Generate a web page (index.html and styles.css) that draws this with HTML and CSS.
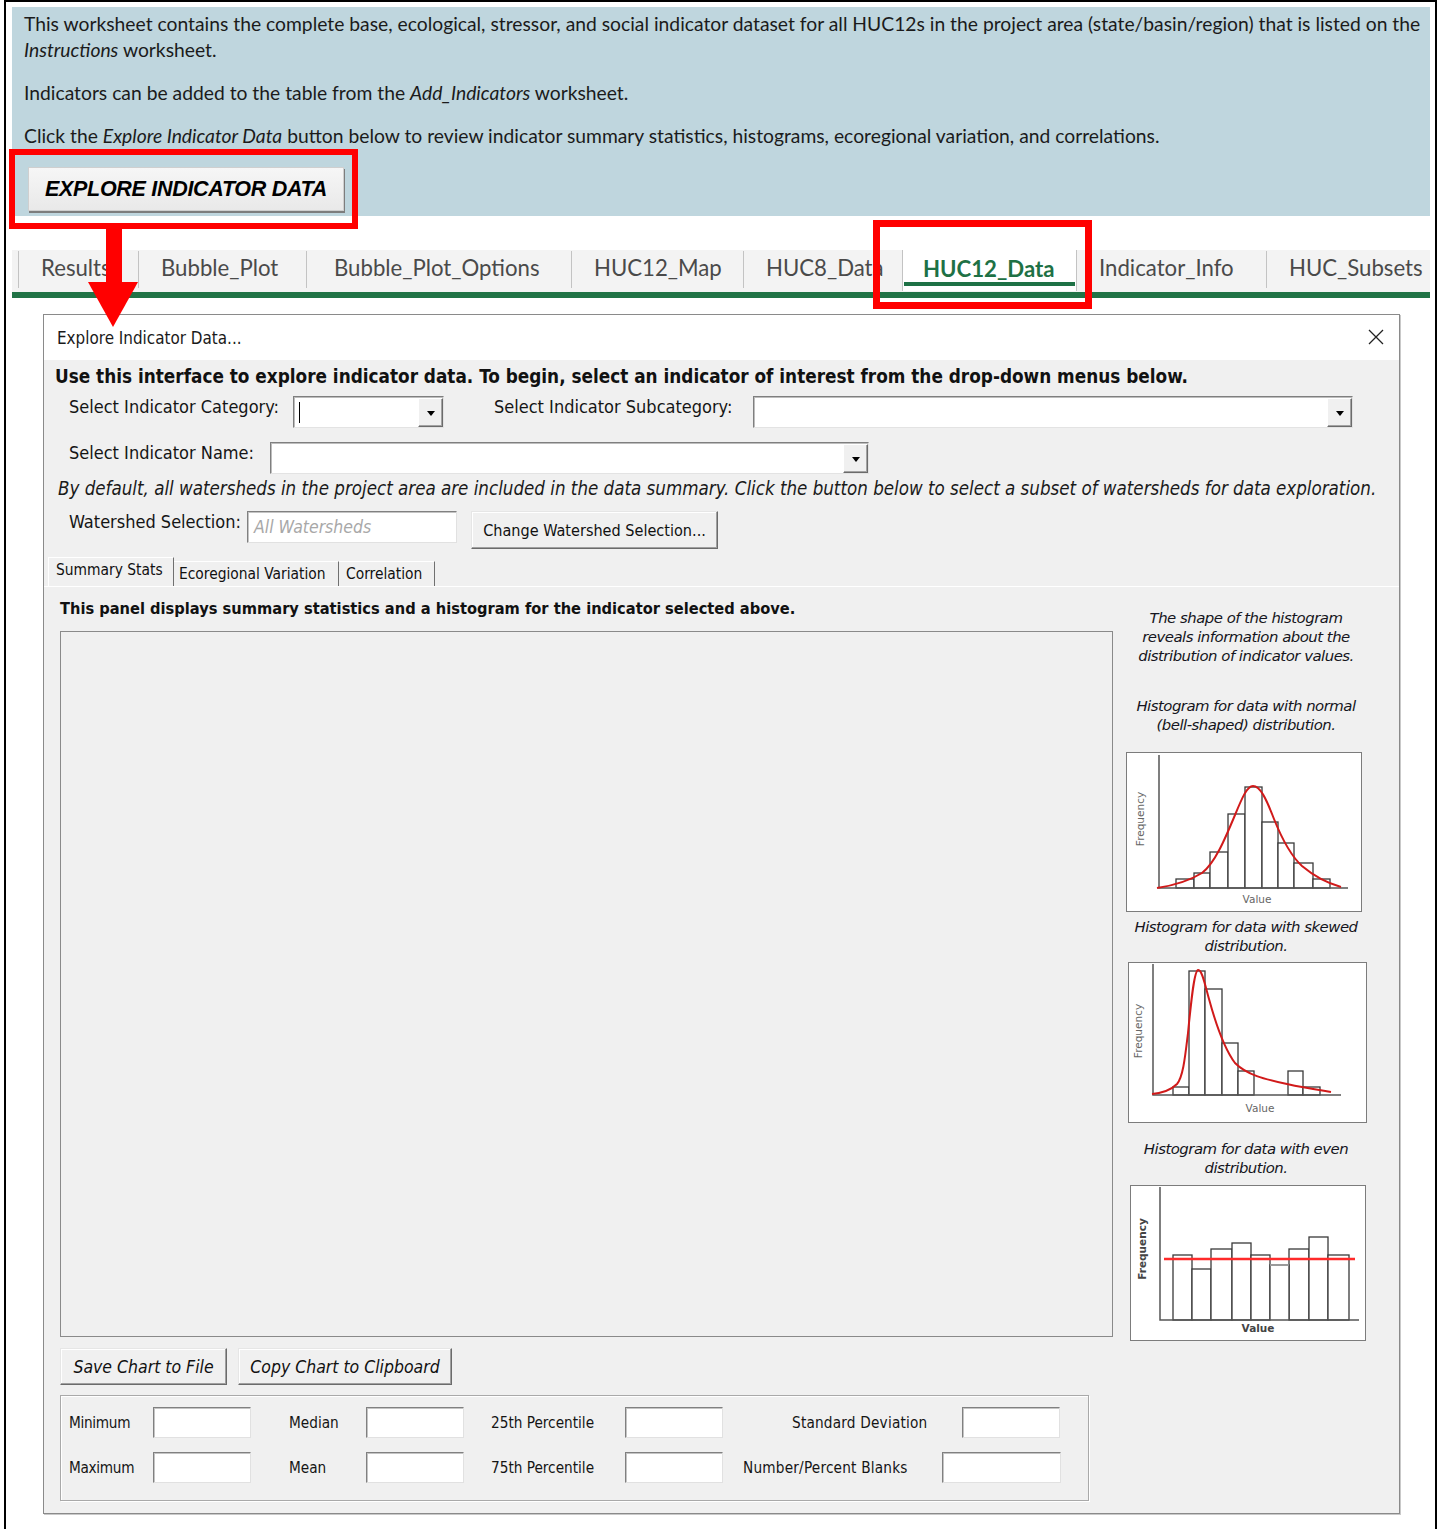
FILE: index.html
```html
<!DOCTYPE html>
<html lang="en">
<head>
<meta charset="utf-8">
<title>HUC12_Data</title>
<link rel="stylesheet" href="styles.css">
</head>
<body>
<div class="sheet">
  <section class="banner">
    <p class="nowrap">This worksheet contains the complete base, ecological, stressor, and social indicator dataset for all HUC12s in the project area (state/basin/region) that is listed on the<br><em>Instructions</em> worksheet.</p>
    <p class="nowrap">Indicators can be added to the table from the <em>Add_Indicators</em> worksheet.</p>
    <p class="nowrap">Click the <em>Explore Indicator Data</em> button below to review indicator summary statistics, histograms, ecoregional variation, and correlations.</p>
    <button class="explore-btn" type="button">EXPLORE INDICATOR DATA</button>
  </section>

  <nav class="sheet-tabs">
    <span class="sheet-tab">Results</span>
    <span class="sheet-tab">Bubble_Plot</span>
    <span class="sheet-tab">Bubble_Plot_Options</span>
    <span class="sheet-tab">HUC12_Map</span>
    <span class="sheet-tab">HUC8_Data</span>
    <span class="sheet-tab active">HUC12_Data</span>
    <span class="sheet-tab">Indicator_Info</span>
    <span class="sheet-tab">HUC_Subsets</span>
  </nav>

  <div class="cells">
    <div class="dialog">
      <header class="dlg-title">
        <span>Explore Indicator Data...</span>
        <svg class="dlg-close" width="16" height="16" viewBox="0 0 16 16" aria-hidden="true">
          <path d="M1 1 L15 15 M15 1 L1 15" stroke="#222" stroke-width="1.3" fill="none"/>
        </svg>
      </header>

      <div class="dlg-body">
        <p class="dlg-intro">Use this interface to explore indicator data. To begin, select an indicator of interest from the drop-down menus below.</p>

        <div class="form-row row-cat">
          <span class="lbl lbl-cat">Select Indicator Category:</span>
          <div class="combo combo-cat"><span class="combo-text"><i class="caret"></i></span><span class="combo-drop"><i class="tri"></i></span></div>
          <span class="lbl lbl-sub">Select Indicator Subcategory:</span>
          <div class="combo combo-sub"><span class="combo-text"></span><span class="combo-drop"><i class="tri"></i></span></div>
        </div>

        <div class="form-row row-name">
          <span class="lbl lbl-name">Select Indicator Name:</span>
          <div class="combo combo-name"><span class="combo-text"></span><span class="combo-drop"><i class="tri"></i></span></div>
        </div>

        <p class="dlg-note">By default, all watersheds in the project area are included in the data summary. Click the button below to select a subset of watersheds for data exploration.</p>

        <div class="form-row row-ws">
          <span class="lbl lbl-ws">Watershed Selection:</span>
          <div class="field field-ws">All Watersheds</div>
          <button class="btn btn-ws" type="button">Change Watershed Selection...</button>
        </div>

        <div class="page-tabs">
          <span class="page-tab active">Summary Stats</span>
          <span class="page-tab">Ecoregional Variation</span>
          <span class="page-tab">Correlation</span>
        </div>

        <div class="page">
          <div class="page-main">
            <p class="page-heading">This panel displays summary statistics and a histogram for the indicator selected above.</p>
            <div class="chart-box"></div>
            <div class="chart-actions">
              <button class="btn btn-save" type="button">Save Chart to File</button>
              <button class="btn btn-copy" type="button">Copy Chart to Clipboard</button>
            </div>
            <div class="stats">
              <div class="stats-row">
                <span class="s-lbl s1">Minimum</span><span class="field s-box"></span>
                <span class="s-lbl s2">Median</span><span class="field s-box"></span>
                <span class="s-lbl s3">25th Percentile</span><span class="field s-box"></span>
                <span class="s-lbl s4">Standard Deviation</span><span class="field s-box"></span>
              </div>
              <div class="stats-row">
                <span class="s-lbl s1">Maximum</span><span class="field s-box"></span>
                <span class="s-lbl s2">Mean</span><span class="field s-box"></span>
                <span class="s-lbl s3">75th Percentile</span><span class="field s-box"></span>
                <span class="s-lbl s4b">Number/Percent Blanks</span><span class="field s-box s-wide"></span>
              </div>
            </div>
          </div>

          <aside class="page-help">
            <p class="help-text help-intro">The shape of the histogram<br>reveals information about the<br>distribution of indicator values.</p>

            <p class="help-text help-normal">Histogram for data with normal<br>(bell-shaped) distribution.</p>
            <svg class="hist hist-normal" width="234" height="158" viewBox="0 0 234 158" aria-hidden="true">
              <g fill="#fff" stroke="#3a3a3a" stroke-width="1.3">
                <rect x="49" y="126" width="18" height="9"/>
                <rect x="67" y="120" width="16" height="15"/>
                <rect x="83" y="99" width="18" height="36"/>
                <rect x="101" y="61" width="17" height="74"/>
                <rect x="118" y="34" width="17" height="101"/>
                <rect x="135" y="69" width="16" height="66"/>
                <rect x="151" y="90" width="16" height="45"/>
                <rect x="167" y="110" width="19" height="25"/>
                <rect x="186" y="126" width="17" height="9"/>
              </g>
              <path d="M32 2 V135 H221" fill="none" stroke="#555" stroke-width="1.5"/>
              <path d="M30 135 C50 132 62 128 75 120 C88 110 98 86 108 62 C115 45 120 33 126 33 C133 33 139 45 147 66 C155 86 163 102 175 113 C188 124 200 130 214 134" fill="none" stroke="#d11a1a" stroke-width="2"/>
              <text class="ax-lbl" transform="translate(17 66) rotate(-90)" text-anchor="middle">Frequency</text>
              <text class="ax-lbl" x="130" y="150" text-anchor="middle">Value</text>
            </svg>

            <p class="help-text help-skewed">Histogram for data with skewed<br>distribution.</p>
            <svg class="hist hist-skewed" width="237" height="159" viewBox="0 0 237 159" aria-hidden="true">
              <g fill="#fff" stroke="#3a3a3a" stroke-width="1.3">
                <rect x="44" y="124" width="16" height="8"/>
                <rect x="60" y="8" width="16" height="124"/>
                <rect x="76" y="26" width="17" height="106"/>
                <rect x="93" y="80" width="16" height="52"/>
                <rect x="109" y="108" width="16" height="24"/>
                <rect x="159" y="108" width="15" height="24"/>
                <rect x="174" y="124" width="17" height="8"/>
              </g>
              <path d="M24 1 V132 H212" fill="none" stroke="#555" stroke-width="1.5"/>
              <path d="M23 131 C33 130 42 127 48 121 C54 114 56 95 59 70 C62 40 65 8 69 7 C73 6 76 22 80 36 C86 58 94 84 106 100 C118 112 135 116 158 121 C176 125 190 127 202 129" fill="none" stroke="#d11a1a" stroke-width="2"/>
              <text class="ax-lbl" transform="translate(13 68) rotate(-90)" text-anchor="middle">Frequency</text>
              <text class="ax-lbl" x="131" y="149" text-anchor="middle">Value</text>
            </svg>

            <p class="help-text help-even">Histogram for data with even<br>distribution.</p>
            <svg class="hist hist-even" width="234" height="154" viewBox="0 0 234 154" aria-hidden="true">
              <g fill="#fff" stroke="#3a3a3a" stroke-width="1.3">
                <rect x="42" y="69" width="19" height="65"/>
                <rect x="61" y="83" width="19" height="51"/>
                <rect x="80" y="63" width="21" height="71"/>
                <rect x="101" y="57" width="19" height="77"/>
                <rect x="120" y="69" width="19" height="65"/>
                <rect x="158" y="63" width="20" height="71"/>
                <rect x="178" y="51" width="19" height="83"/>
                <rect x="197" y="69" width="21" height="65"/>
              </g>
              <path d="M139 134 V79 H158 V134" fill="#fff" stroke="#3a3a3a" stroke-width="1.3"/>
              <path d="M139 79 H158" stroke="#b5b5b5" stroke-width="1.3"/>
              <path d="M29 1 V134 H228" fill="none" stroke="#555" stroke-width="1.5"/>
              <path d="M33 73 H224" stroke="#ff2a2a" stroke-width="2.6"/>
              <text class="ax-lbl ax-bold" transform="translate(15 63) rotate(-90)" text-anchor="middle">Frequency</text>
              <text class="ax-lbl ax-bold" x="127" y="146" text-anchor="middle">Value</text>
            </svg>
          </aside>
        </div>
      </div>
    </div>
  </div>

  <!-- red call-outs drawn over the sheet -->
  <div class="callout callout-btn"></div>
  <div class="callout callout-tab"></div>
  <svg class="callout-arrow" width="50" height="102" viewBox="0 0 50 102" aria-hidden="true">
    <rect x="18" y="0" width="16" height="57" fill="#ff0000"/>
    <polygon points="0,56 50,56 25,101" fill="#ff0000"/>
  </svg>
</div>
</body>
</html>
```

FILE: styles.css
```css
* { box-sizing: border-box; }

html, body {
  margin: 0;
  padding: 0;
  background: #fff;
}

body {
  width: 1442px;
  height: 1529px;
  overflow: hidden;
  font-family: "DejaVu Sans Condensed", "DejaVu Sans", sans-serif;
  color: #111;
}

/* ---------- worksheet frame ---------- */
.sheet {
  position: relative;
  margin-left: 4px;
  width: 1433px;
  height: 1540px;
  border: 2px solid #000;
  border-bottom: none;
  overflow: hidden;
  background: #fff;
}

.banner {
  margin: 5px 5px 0 6px;
  height: 209px;
  padding: 4px 0 0 12px;
  background: #bfd6de;
  font-family: Lato, "Open Sans", sans-serif;
  font-size: 19.3px;
  line-height: 26px;
  color: #1b1b1b;
}

.banner p { margin: 17px 0 0; }
.banner p:first-child { margin-top: 0; }
.nowrap { white-space: nowrap; }

.explore-btn {
  display: block;
  margin: 18px 0 0 4px;
  width: 316px;
  height: 44px;
  padding: 0;
  border: 1px solid #cfcfcf;
  background: linear-gradient(#f6f6f6, #e9e9e9);
  box-shadow: 1px 2px 0 #7d7d7d;
  font-family: "Liberation Sans", Arial, sans-serif;
  font-weight: bold;
  font-style: italic;
  font-size: 21.5px;
  letter-spacing: -0.3px;
  color: #000;
}

/* ---------- sheet tabs ---------- */
.sheet-tabs {
  display: flex;
  margin: 34px 5px 0 6px;
  height: 48px;
  padding-left: 6px;
  background: #f3f3f3;
  border-bottom: 6px solid #217346;
  font-family: Lato, "Open Sans", sans-serif;
  font-size: 22.2px;
  color: #4a4a4a;
}

.sheet-tab {
  display: flex;
  align-items: center;
  height: 37px;
  margin-top: 1px;
  padding: 0 0 4px 22px;
  border-left: 1px solid #c3c3c3;
  white-space: nowrap;
  overflow: hidden;
}

.sheet-tab:nth-child(1) { width: 120px; }
.sheet-tab:nth-child(2) { width: 168px; }
.sheet-tab:nth-child(3) { width: 265px; padding-left: 27px; }
.sheet-tab:nth-child(4) { width: 172px; }
.sheet-tab:nth-child(5) { width: 159px; }
.sheet-tab:nth-child(6) { width: 175px; }
.sheet-tab:nth-child(7) { width: 189px; }
.sheet-tab:nth-child(8) { width: 160px; }

.sheet-tab.active {
  height: 41px;
  margin-top: 0;
  padding-left: 20px;
  border-right: 1px solid #c3c3c3;
  background: linear-gradient(#1e7145, #1e7145) no-repeat left 1px bottom 5px / calc(100% - 2px) 4px, #fff;
  color: #1e7145;
  font-weight: bold;
}

.sheet-tab.active + .sheet-tab { border-left: none; }

/* ---------- dialog ---------- */
.cells {
  padding: 16px 0 0 37px;
}

.dialog {
  width: 1357px;
  border: 1px solid #8a8a8a;
  background: #f0f0f0;
  box-shadow: 1px 1px 0 #c9c9c9;
}

.dlg-title {
  display: flex;
  align-items: center;
  justify-content: space-between;
  height: 45px;
  padding: 0 15px 0 13px;
  background: #fff;
  font-size: 16.9px;
  color: #1a1a1a;
}

.dlg-close { display: block; margin-top: -1px; }

.dlg-body { font-size: 18px; }

.dlg-intro {
  margin: 6px 0 0 11px;
  line-height: 22px;
  font-weight: bold;
  font-size: 18.8px;
  white-space: nowrap;
}

.form-row {
  display: flex;
  align-items: flex-start;
  padding-left: 25px;
}

.row-cat { margin-top: 8px; height: 32px; }
.row-name { margin-top: 14px; height: 32px; }
.row-ws { margin-top: 12px; height: 38px; }

.lbl { white-space: nowrap; color: #151515; line-height: 22px; }
.lbl-cat { width: 224px; }
.lbl-sub { width: 259px; margin-left: 50px; }
.lbl-name { width: 201px; }
.lbl-ws { width: 178px; }

.combo {
  display: flex;
  height: 32px;
  background: #fff;
  border: 1px solid #e3e3e3;
  border-top-color: #7f7f7f;
  border-left-color: #7f7f7f;
  box-shadow: inset 1px 1px 0 #bdbdbd;
}

.combo-cat { width: 151px; }
.combo-sub { width: 600px; }
.combo-name { width: 599px; }

.combo-text {
  flex: 1;
  display: flex;
  align-items: center;
  padding-left: 5px;
}

.caret {
  display: block;
  width: 1px;
  height: 21px;
  background: #000;
}

.combo-drop {
  display: flex;
  align-items: center;
  justify-content: center;
  width: 25px;
  margin: 1px 0 0;
  background: #f0f0f0;
  border: 1px solid;
  border-color: #fff #6b6b6b #6b6b6b #fff;
  box-shadow: inset -1px -1px 0 #a3a3a3;
}

.tri {
  display: block;
  width: 0;
  height: 0;
  border-top: 5px solid #000;
  border-left: 4px solid transparent;
  border-right: 4px solid transparent;
  margin-top: 2px;
}

.dlg-note {
  margin: 5px 0 0 14px;
  line-height: 20px;
  font-size: 18.6px;
  font-style: italic;
  white-space: nowrap;
  color: #1a1a1a;
}

.field {
  background: #fff;
  border: 1px solid #e1e1e1;
  border-top-color: #808080;
  border-left-color: #808080;
  box-shadow: inset 1px 1px 0 #c4c4c4;
}

.field-ws {
  width: 210px;
  height: 32px;
  padding-left: 6px;
  font-style: italic;
  font-size: 17.5px;
  line-height: 30px;
  color: #a8a8a8;
}

.btn {
  padding: 0;
  background: #f0f0f0;
  border: 1px solid;
  border-color: #e6e6e6 #6b6b6b #6b6b6b #e6e6e6;
  box-shadow: inset -1px -1px 0 #a0a0a0, inset 1px 1px 0 #fff;
  font-family: inherit;
  font-size: 16.1px;
  color: #111;
}

.btn-ws {
  width: 247px;
  height: 38px;
  margin-left: 14px;
}

/* ---------- page tabs ---------- */
.page-tabs {
  display: flex;
  align-items: flex-end;
  height: 29px;
  margin-top: 8px;
  padding-left: 4px;
  font-size: 15.4px;
}

.page-tab {
  height: 25px;
  padding: 3px 0 0 5px;
  border-top: 1px solid #fff;
  border-right: 1px solid #707070;
  white-space: nowrap;
}

.page-tab:nth-child(2) { width: 165px; padding-left: 5px; }
.page-tab:nth-child(3) { width: 96px; padding-left: 7px; }

.page-tab.active {
  width: 126px;
  height: 29px;
  padding: 3px 0 0 7px;
  border-left: 1px solid #fff;
  border-right: 1px solid #707070;
}

.page {
  display: flex;
  padding: 12px 0 12px 16px;
  border-top: 1px solid #fff;
}

.page-main { width: 1053px; }

.page-heading {
  margin: 0;
  line-height: 20px;
  font-size: 16.3px;
  font-weight: bold;
  white-space: nowrap;
}

.chart-box {
  margin-top: 12px;
  height: 706px;
  border: 1px solid #8a8a8a;
  background: #f0f0f0;
}

.chart-actions {
  display: flex;
  margin-top: 11px;
  height: 37px;
}

.btn-save, .btn-copy {
  height: 37px;
  font-style: italic;
  font-size: 17.5px;
}

.btn-save { width: 167px; }
.btn-copy { width: 214px; margin-left: 11px; }

.stats {
  width: 1029px;
  height: 106px;
  margin-top: 10px;
  padding: 11px 0 0 8px;
  border: 1px solid #a9a9a9;
  box-shadow: inset 1px 1px 0 #fff, 1px 1px 0 #fff;
  font-size: 15.2px;
}

.stats-row {
  display: flex;
  align-items: center;
  height: 31px;
}

.stats-row + .stats-row { margin-top: 14px; }

.s-lbl { white-space: nowrap; color: #151515; }
.s1 { width: 84px; letter-spacing: -0.3px; }
.s2 { width: 77px; margin-left: 38px; }
.s3 { width: 134px; margin-left: 27px; }
.s4 { width: 170px; margin-left: 69px; letter-spacing: 0.2px; }
.s4b { width: 199px; margin-left: 20px; letter-spacing: 0.2px; }

.s-box { width: 98px; height: 31px; }
.s-wide { width: 119px; }

/* ---------- help column ---------- */
.page-help {
  width: 252px;
  margin-left: 7px;
  padding-top: 10px;
  text-align: center;
}

.help-text {
  margin: 0;
  font-family: "DejaVu Sans", sans-serif;
  font-style: italic;
  font-size: 14.9px;
  line-height: 19px;
  letter-spacing: -0.5px;
  color: #151520;
  white-space: nowrap;
}

.help-normal { margin-top: 31px; }
.help-skewed { margin-top: 6px; }
.help-even { margin-top: 17px; line-height: 18.5px; }

.hist {
  display: block;
  margin: 0 auto;
  background: #fff;
  border: 1px solid #7c7c7c;
  box-sizing: content-box;
}

.hist-normal { margin-top: 17px; transform: translateX(-2px); }
.hist-skewed { margin-top: 6px; transform: translateX(1px); }
.hist-even { margin-top: 8px; transform: translateX(2px); }

.ax-lbl {
  font-family: "DejaVu Sans", sans-serif;
  font-size: 10.5px;
  fill: #666;
}

.ax-bold {
  font-weight: bold;
  fill: #444;
}

/* ---------- red call-outs ---------- */
.callout {
  position: absolute;
  border: 6px solid #ff0000;
}

.callout-btn {
  left: 3px;
  top: 147px;
  width: 349px;
  height: 80px;
}

.callout-tab {
  left: 867px;
  top: 218px;
  width: 219px;
  height: 89px;
  border-width: 7px;
}

.callout-arrow {
  position: absolute;
  left: 82px;
  top: 224px;
}
```
